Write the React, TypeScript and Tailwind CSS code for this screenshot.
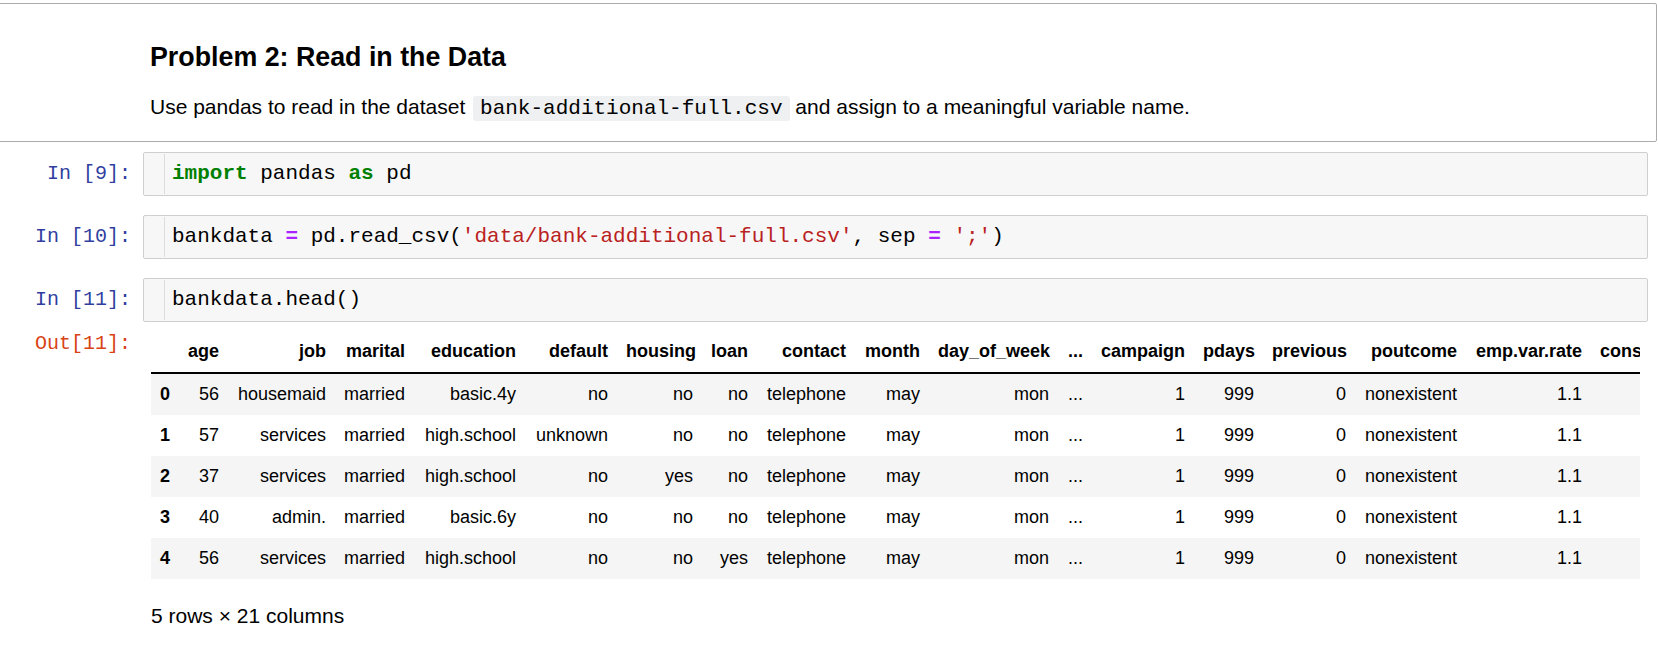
import React from 'react';

const sans = "font-['Liberation_Sans',Arial,Helvetica,sans-serif]";
const mono = "font-['Liberation_Mono','Courier_New',monospace]";

const columns = [
  { name: '', w: 'w-[28px]' },
  { name: 'age', w: 'w-[49px]' },
  { name: 'job', w: 'w-[107px]' },
  { name: 'marital', w: 'w-[79px]' },
  { name: 'education', w: 'w-[111px]' },
  { name: 'default', w: 'w-[92px]' },
  { name: 'housing', w: 'w-[85px]' },
  { name: 'loan', w: 'w-[55px]' },
  { name: 'contact', w: 'w-[98px]' },
  { name: 'month', w: 'w-[74px]' },
  { name: 'day_of_week', w: 'w-[129px]' },
  { name: '...', w: 'w-[34px]' },
  { name: 'campaign', w: 'w-[102px]' },
  { name: 'pdays', w: 'w-[69px]' },
  { name: 'previous', w: 'w-[92px]' },
  { name: 'poutcome', w: 'w-[111px]' },
  { name: 'emp.var.rate', w: 'w-[125px]' },
  { name: 'cons.price.idx', w: 'w-[130px]' },
];

const rows = [
  ['0', '56', 'housemaid', 'married', 'basic.4y', 'no', 'no', 'no', 'telephone', 'may', 'mon', '...', '1', '999', '0', 'nonexistent', '1.1', '93.994'],
  ['1', '57', 'services', 'married', 'high.school', 'unknown', 'no', 'no', 'telephone', 'may', 'mon', '...', '1', '999', '0', 'nonexistent', '1.1', '93.994'],
  ['2', '37', 'services', 'married', 'high.school', 'no', 'yes', 'no', 'telephone', 'may', 'mon', '...', '1', '999', '0', 'nonexistent', '1.1', '93.994'],
  ['3', '40', 'admin.', 'married', 'basic.6y', 'no', 'no', 'no', 'telephone', 'may', 'mon', '...', '1', '999', '0', 'nonexistent', '1.1', '93.994'],
  ['4', '56', 'services', 'married', 'high.school', 'no', 'no', 'yes', 'telephone', 'may', 'mon', '...', '1', '999', '0', 'nonexistent', '1.1', '93.994'],
];

function CodeCell({ n, children }: { n: number; children: React.ReactNode }) {
  return (
    <div className="flex items-center h-[44px]">
      <div className={`${mono} w-[143px] pr-[12px] text-right text-[20px] text-[#303f9f] whitespace-pre`}>
        In [{n}]:
      </div>
      <div className="w-[1505px] h-full flex border border-[#cfcfcf] bg-[#f7f7f7] rounded-[2px]">
        <div className="w-[20px] shrink-0" />
        <div className="w-px my-[1px] bg-[#dddddd] shrink-0" />
        <div className={`${mono} pl-[7px] flex items-center text-[21px] text-black`}>
          <span className="whitespace-pre">{children}</span>
        </div>
      </div>
    </div>
  );
}

export default function App() {
  return (
    <div className={`${sans} w-[1658px] h-[662px] overflow-hidden bg-white text-black`}>
      <div className="pt-[3px]">
        {/* markdown cell (selected) */}
        <div className="ml-[-8px] w-[1665px] h-[139px] border border-[#ababab] rounded-[2px] pl-[157px] pt-[37px]">
          <h3 className="text-[26.8px] leading-[32px] font-bold">Problem 2: Read in the Data</h3>
          <p className="mt-5 text-[21px] leading-[28px] whitespace-nowrap">
            Use pandas to read in the dataset{' '}
            <code className={`${mono} bg-[#eff0f1] px-[7px] py-[1px] rounded-[3px] ml-[2px]`}>bank-additional-full.csv</code>{' '}
            and assign to a meaningful variable name.
          </p>
        </div>
      </div>

      <div className="mt-[10px] flex flex-col gap-[19px]">
        <CodeCell n={9}>
          <span className="text-[#008000] font-bold">import</span>
          {' pandas '}
          <span className="text-[#008000] font-bold">as</span>
          {' pd'}
        </CodeCell>
        <CodeCell n={10}>
          {'bankdata '}
          <span className="text-[#aa22ff] font-bold">=</span>
          {' pd.read_csv('}
          <span className="text-[#ba2121]">'data/bank-additional-full.csv'</span>
          {', sep '}
          <span className="text-[#aa22ff] font-bold">=</span>
          {' '}
          <span className="text-[#ba2121]">';'</span>
          {')'}
        </CodeCell>
        <CodeCell n={11}>bankdata.head()</CodeCell>
      </div>

      {/* output */}
      <div className="flex items-start pt-[9px]">
        <div className={`${mono} w-[143px] pr-[12px] mt-[1px] text-right text-[20px] leading-[24px] text-[#d84315]`}>
          Out[11]:
        </div>
        <div className="ml-[8px]">
          <div className="w-[1489px] overflow-hidden">
            <table className="table-fixed w-[1570px] border-separate border-spacing-0 text-[18px] leading-[23px] whitespace-nowrap">
              <colgroup>
                {columns.map((c, i) => (
                  <col key={i} className={c.w} />
                ))}
              </colgroup>
              <thead>
                <tr>
                  {columns.map((c, i) => (
                    <th key={i} className="px-[9px] py-[9px] text-right font-bold border-b-2 border-black">
                      {c.name}
                    </th>
                  ))}
                </tr>
              </thead>
              <tbody>
                {rows.map((r, ri) => (
                  <tr key={ri} className={ri % 2 === 0 ? 'bg-[#f5f5f5]' : 'bg-white'}>
                    {r.map((v, ci) =>
                      ci === 0 ? (
                        <th key={ci} className="px-[9px] py-[9px] text-left font-bold">
                          {v}
                        </th>
                      ) : (
                        <td key={ci} className="px-[9px] py-[9px] text-right font-normal">
                          {v}
                        </td>
                      )
                    )}
                  </tr>
                ))}
              </tbody>
            </table>
          </div>
          <p className="mt-[23px] text-[21px] leading-[28px]">5 rows × 21 columns</p>
        </div>
      </div>
    </div>
  );
}
